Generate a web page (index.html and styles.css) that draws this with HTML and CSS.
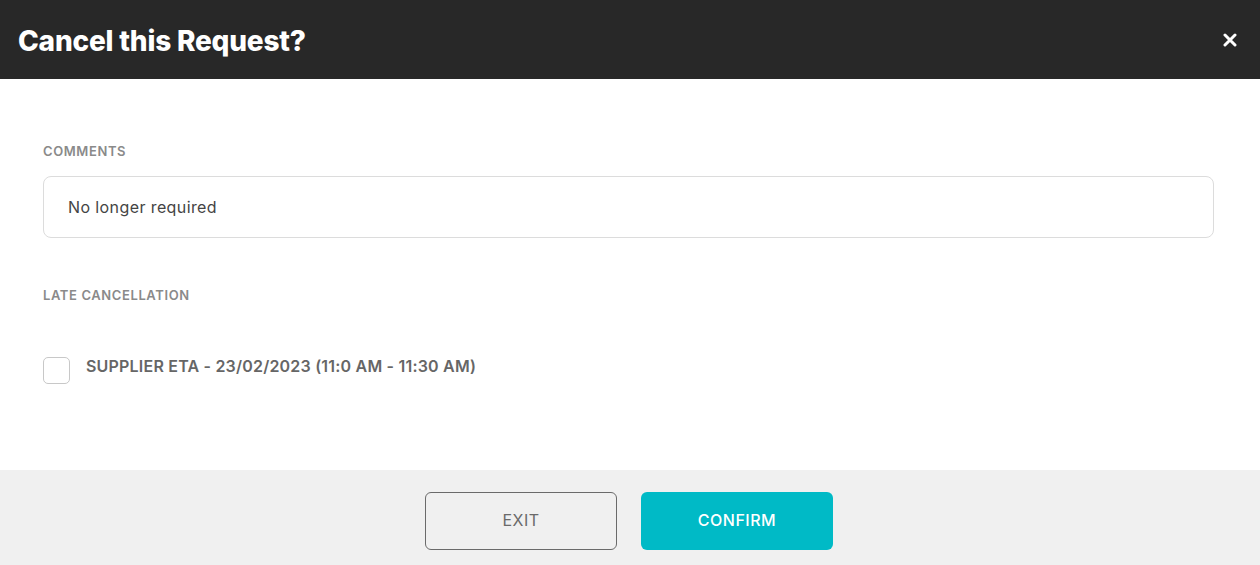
FILE: index.html
```html
<!DOCTYPE html>
<html>
<head>
<meta charset="utf-8">
<link rel="stylesheet" href="styles.css">
</head>
<body>
<div class="modal">
  <header class="header">
    <h1 class="title">Cancel this Request?</h1>
    <button class="close" aria-label="Close">
      <svg width="14" height="14" viewBox="0 0 14 14"><path d="M2 2 L12 12 M12 2 L2 12" stroke="#fff" stroke-width="3" stroke-linecap="round"/></svg>
    </button>
  </header>
  <main class="body">
    <div class="label">COMMENTS</div>
    <div class="input">No longer required</div>
    <div class="label label-late">LATE CANCELLATION</div>
    <label class="check-row">
      <span class="checkbox"></span>
      <span class="check-text">SUPPLIER ETA - 23/02/2023 (11:0 AM - 11:30 AM)</span>
    </label>
  </main>
  <footer class="footer">
    <button class="btn btn-exit">EXIT</button>
    <button class="btn btn-confirm">CONFIRM</button>
  </footer>
</div>
</body>
</html>
```
FILE: styles.css
```css
* { box-sizing: border-box; }
html, body { margin: 0; padding: 0; }
body { font-family: "Inter", "Liberation Sans", sans-serif; background: #fff; width: 1260px; height: 565px; overflow: hidden; }
.modal { display: flex; flex-direction: column; height: 565px; }
.header { height: 79px; background: #282828; display: flex; align-items: center; justify-content: space-between; padding: 2px 23px 0 18px; }
.title { margin: 0; color: #fff; font-size: 28px; font-weight: 800; letter-spacing: -0.2px; }
.close { background: none; border: 0; padding: 0; width: 14px; height: 14px; display: flex; margin-top: -2px; }
.body { flex: 1; padding: 64px 46px 0 43px; }
.label { font-size: 13px; font-weight: 600; color: #8a8a8a; line-height: 16px; letter-spacing: 0.6px; }
.input { margin-top: 17px; height: 62px; border: 1px solid #dcdcdc; border-radius: 8px; padding: 0 24px; display: flex; align-items: center; font-size: 16px; color: #444; letter-spacing: 0.4px; }
.label-late { margin-top: 49px; }
.check-row { margin-top: 54px; display: flex; align-items: center; gap: 16px; }
.checkbox { width: 27px; height: 27px; border: 1px solid #c8c8c8; border-radius: 5px; background: #fff; }
.check-text { font-size: 16px; font-weight: 600; color: #666; margin-top: -10px; letter-spacing: 0.2px; }
.footer { height: 95px; background: #f0f0f0; display: flex; justify-content: center; align-items: flex-start; gap: 24px; padding-top: 22px; padding-right: 2px; }
.btn { width: 192px; height: 58px; border-radius: 6px; font-family: inherit; font-size: 16px; padding-bottom: 4px; letter-spacing: 0.5px; }
.btn-exit { background: transparent; border: 1px solid #6a6a6a; color: #6a6a6a; }
.btn-confirm { background: #00bac6; border: 0; color: #fff; font-weight: 500; }
```
